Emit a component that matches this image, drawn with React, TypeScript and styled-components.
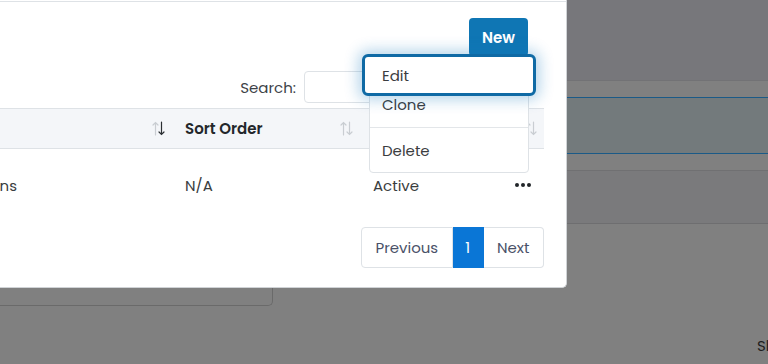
import styled, { createGlobalStyle } from 'styled-components';

const GlobalStyle = createGlobalStyle`
  html, body {
    margin: 0;
    padding: 0;
  }
  body {
    font-family: 'Poppins', 'Open Sans', 'Noto Sans', sans-serif;
    font-size: 15px;
    color: #212529;
  }
  * {
    box-sizing: border-box;
  }
`;

const SortIcon = ({ active }: { active?: boolean }) => (
  <svg width="13" height="15" viewBox="0 0 13 15" fill="none" strokeWidth="1.2" strokeLinecap="round">
    <g stroke="#c9cdd2">
      <path d="M3.5 14V1.5M1 4L3.5 1.5L6 4" />
    </g>
    <g stroke={active ? '#2b2f33' : '#c9cdd2'}>
      <path d="M9.5 1V13.5M7 11L9.5 13.5L12 11" />
    </g>
  </svg>
);

const Dots = () => (
  <svg width="16" height="4" viewBox="0 0 16 4" fill="#212529">
    <circle cx="2" cy="2" r="2" />
    <circle cx="8" cy="2" r="2" />
    <circle cx="14" cy="2" r="2" />
  </svg>
);

const App = () => {
  return (
    <Screen>
      <GlobalStyle />
      <Backdrop>
        <PageHeader />
        <HighlightStrip />
        <Panel />
        <Card />
        <FooterRow>Showing</FooterRow>
      </Backdrop>

      <Modal>
        <ModalHeader />
        <ModalBody>
          <TopBar>
            <NewButton>New</NewButton>
          </TopBar>
          <SearchRow>
            <SearchLabel>Search:</SearchLabel>
            <SearchInput />
          </SearchRow>

          <Table>
            <HeadRow>
              <HeadCell>
                <span>Name</span>
                <SortIcon active />
              </HeadCell>
              <HeadCell>
                <span>Sort Order</span>
                <SortIcon />
              </HeadCell>
              <HeadCell $last>
                <span>Status</span>
                <SortIcon />
              </HeadCell>
            </HeadRow>
            <BodyRow>
              <Cell>Employee Access Permissions</Cell>
              <Cell>N/A</Cell>
              <Cell>
                <span>Active</span>
                <Dots />
              </Cell>
            </BodyRow>
          </Table>

          <Pagination>
            <PageButton>Previous</PageButton>
            <PageButton $active>1</PageButton>
            <PageButton>Next</PageButton>
          </Pagination>

          <Menu>
            <MenuItem $focused>Edit</MenuItem>
            <MenuItem>Clone</MenuItem>
            <Divider />
            <MenuItem $last>Delete</MenuItem>
          </Menu>
        </ModalBody>
      </Modal>
    </Screen>
  );
};

const Screen = styled.div`
  position: relative;
  width: 768px;
  height: 364px;
  overflow: hidden;
`;

const Backdrop = styled.div`
  width: 100%;
  height: 100%;
  display: flex;
  flex-direction: column;
  background-color: #808080;
`;

const PageHeader = styled.div`
  height: 81px;
  background-color: #77777b;
  border-bottom: 1px solid #727275;
`;

const HighlightStrip = styled.div`
  margin-top: 16px;
  height: 57px;
  background-color: #737a7c;
  border-top: 1px solid #1b5a87;
  border-bottom: 1px solid #1b5a87;
`;

const Panel = styled.div`
  margin-top: 16px;
  height: 54px;
  background-color: #7a7a7c;
  border-top: 1px solid #707072;
  border-bottom: 1px solid #6e6e70;
`;

const Card = styled.div`
  width: 273px;
  height: 82px;
  border-right: 1px solid #6a6a6a;
  border-bottom: 1px solid #6a6a6a;
  border-radius: 0 0 5px 0;
`;

const FooterRow = styled.div`
  margin-top: 30px;
  padding-left: 757px;
  line-height: 20px;
  white-space: nowrap;
  overflow: hidden;
  color: #1e1e1e;
`;

const Modal = styled.div`
  position: absolute;
  top: -59px;
  right: 201px;
  width: 813px;
  background-color: #ffffff;
  border: 1px solid #d0d3d6;
  border-top: none;
  border-radius: 0 0 5px 5px;
`;

const ModalHeader = styled.div`
  height: 61px;
  border-bottom: 1px solid #dee2e6;
`;

const ModalBody = styled.div`
  position: relative;
  padding: 16px 22px 19px 23px;
`;

const TopBar = styled.div`
  display: flex;
  justify-content: flex-end;
  padding-right: 16px;
`;

const NewButton = styled.button`
  width: 59px;
  height: 38px;
  border: none;
  border-radius: 4px;
  background-color: #0f76b4;
  color: #ffffff;
  font-family: inherit;
  font-size: 15px;
  font-weight: 600;
  cursor: pointer;
`;

const SearchRow = styled.div`
  margin-top: 15px;
  display: flex;
  align-items: center;
  justify-content: flex-end;
  gap: 8px;
  padding-right: 16px;
`;

const SearchLabel = styled.label`
  color: #3d4247;
  font-size: 15px;
`;

const SearchInput = styled.input`
  width: 224px;
  height: 32px;
  border: 1px solid #dee2e6;
  border-radius: 4px;
  outline: none;
`;

const Table = styled.div`
  margin-top: 5px;
  display: flex;
  flex-direction: column;
`;

const HeadRow = styled.div`
  display: grid;
  grid-template-columns: 392px 188px 187px;
  height: 41px;
  background-color: #f4f6f9;
  border-top: 1px solid #dee2e6;
  border-bottom: 1px solid #dee2e6;
`;

const HeadCell = styled.div<{ $last?: boolean }>`
  display: flex;
  align-items: center;
  justify-content: space-between;
  padding: 0 ${(p) => (p.$last ? '8px' : '5px')} 0 15px;
  font-size: 15px;
  font-weight: 600;
  color: #23272b;
`;

const BodyRow = styled.div`
  display: grid;
  grid-template-columns: 392px 188px 187px;
  height: 72px;
`;

const Cell = styled.div`
  display: flex;
  align-items: center;
  justify-content: space-between;
  padding: 0 14px 0 15px;
  color: #3a3d40;
  white-space: nowrap;
`;

const Pagination = styled.div`
  margin-top: 6px;
  display: flex;
  justify-content: flex-end;
`;

const PageButton = styled.button<{ $active?: boolean }>`
  height: 41px;
  padding: 0 ${(p) => (p.$active ? '12.5px' : '13.5px')};
  border: 1px solid ${(p) => (p.$active ? '#0a76d6' : '#dee2e6')};
  border-left: none;
  background-color: ${(p) => (p.$active ? '#0a76d6' : '#ffffff')};
  color: ${(p) => (p.$active ? '#ffffff' : '#4a5168')};
  font-family: inherit;
  font-size: 15px;
  cursor: pointer;
  &:first-child {
    border-left: 1px solid #dee2e6;
    border-radius: 4px 0 0 4px;
  }
  &:last-child {
    border-radius: 0 4px 4px 0;
  }
`;

const Menu = styled.div`
  position: absolute;
  top: 53px;
  right: 37px;
  width: 160px;
  display: flex;
  flex-direction: column;
  padding-bottom: 6px;
  background-color: #ffffff;
  border: 1px solid #dee2e6;
  border-radius: 4px;
`;

const MenuItem = styled.div<{ $focused?: boolean; $last?: boolean }>`
  position: relative;
  display: flex;
  align-items: center;
  height: ${(p) => (p.$focused ? '42px' : p.$last ? '32px' : '36px')};
  padding-left: ${(p) => (p.$focused ? '17px' : '12px')};
  color: #3b3d40;
  font-size: 15px;
  ${(p) =>
    p.$focused &&
    `
    z-index: 1;
    margin: -2px -8px -10px -8px;
    border: 3px solid #0f6aa5;
    border-radius: 6px;
    background-color: #ffffff;
    box-shadow: 0 0 14px 4px rgba(20, 120, 190, 0.3);
  `}
`;

const Divider = styled.div`
  margin: 5px 0 6px;
  height: 1px;
  background-color: #e3e6e9;
`;

export default App;
